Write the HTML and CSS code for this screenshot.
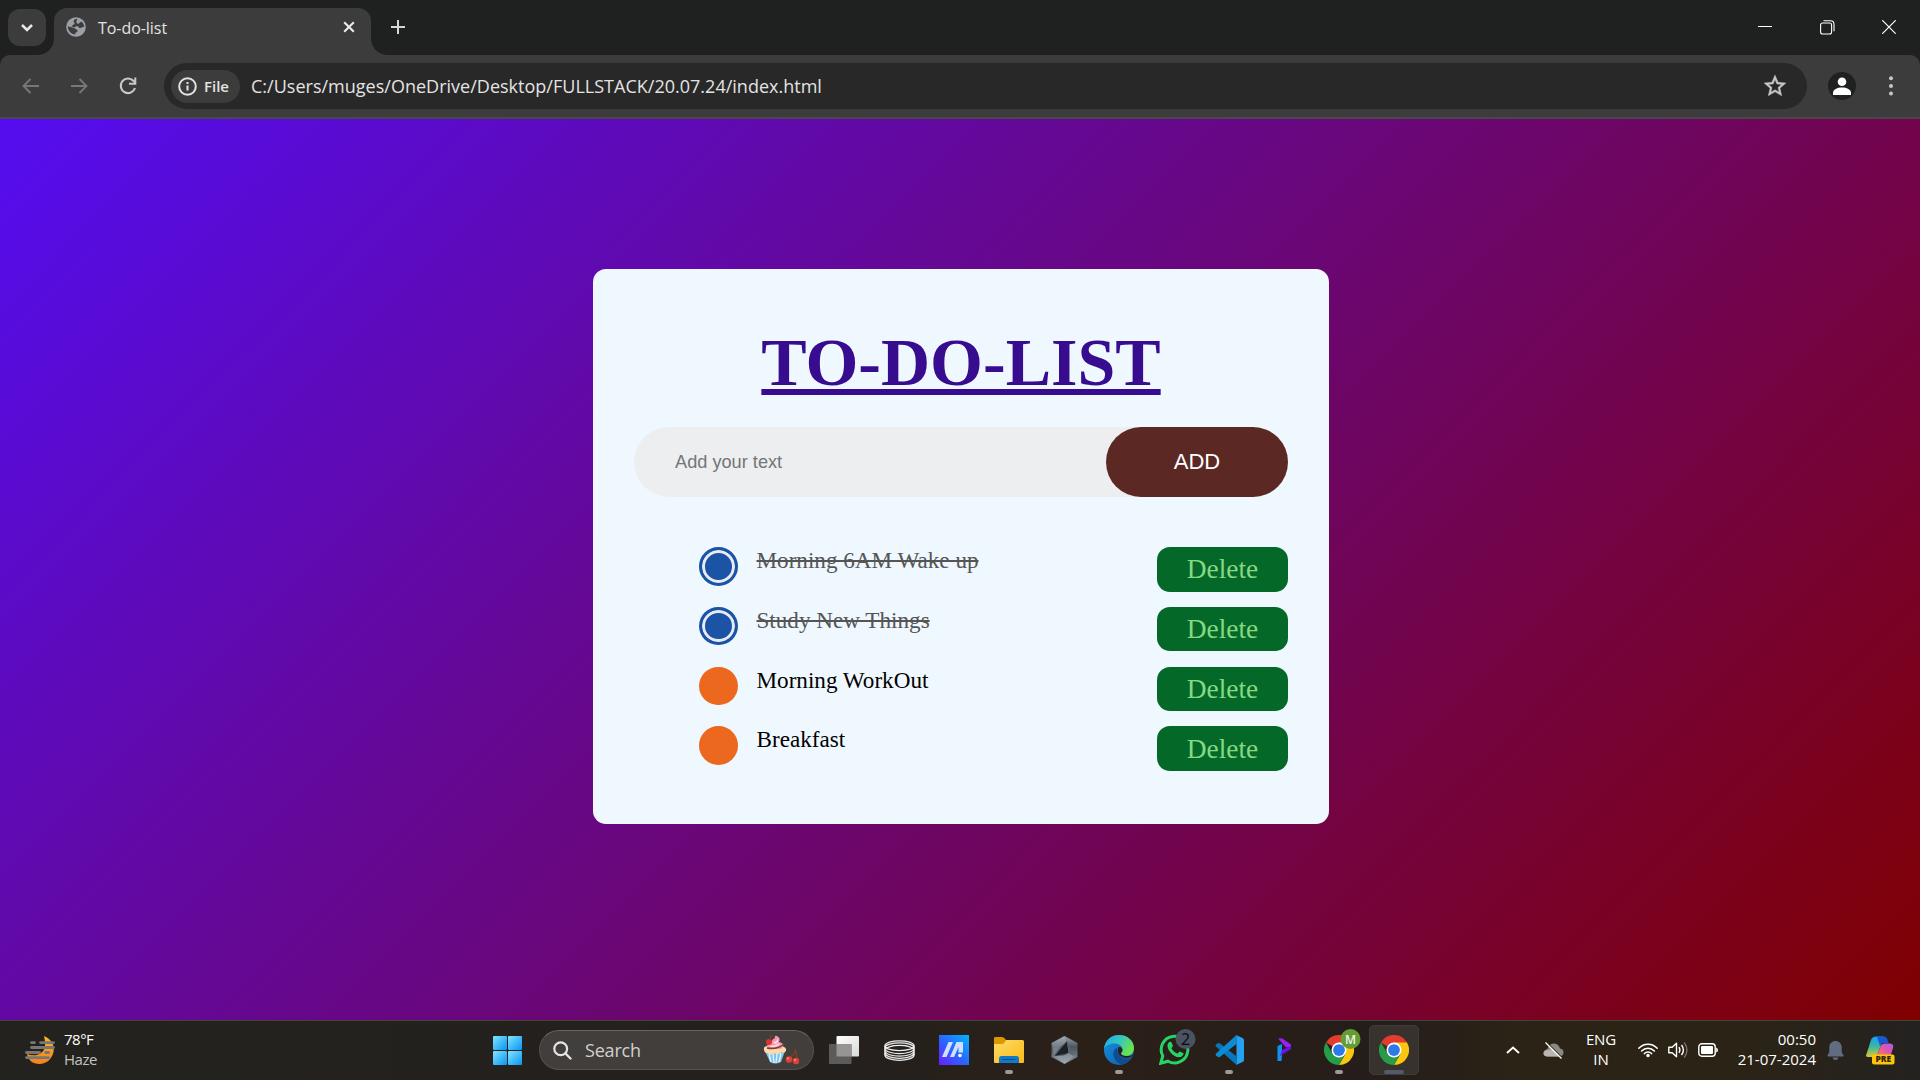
FILE: index.html
```
<!DOCTYPE html>
<html lang="en">
<head>
<meta charset="utf-8">
<title>To-do-list</title>
<link rel="stylesheet" href="styles.css">
</head>
<body>
<svg class="defs" width="0" height="0" aria-hidden="true">
  <defs>
    <linearGradient id="win" x1="0" y1="0" x2="1" y2="1"><stop offset="0" stop-color="#8ae2ff"/><stop offset=".5" stop-color="#42bdf8"/><stop offset="1" stop-color="#0d93f0"/></linearGradient>
    <linearGradient id="asus" x1="0" y1="1" x2="1" y2="0"><stop offset="0" stop-color="#6a1cff"/><stop offset=".5" stop-color="#2869ff"/><stop offset="1" stop-color="#00b4ff"/></linearGradient>
    <linearGradient id="fold" x1="0" y1="0" x2="1" y2="1"><stop offset="0" stop-color="#ffdc6a"/><stop offset="1" stop-color="#fbb913"/></linearGradient>
    <linearGradient id="moon" x1="0" y1="0" x2="0" y2="1"><stop offset="0" stop-color="#ffb52b"/><stop offset="1" stop-color="#f3831b"/></linearGradient>
    <linearGradient id="hex" x1="0" y1="0" x2="0" y2="1"><stop offset="0" stop-color="#98a0a8"/><stop offset=".4" stop-color="#4a545f"/><stop offset="1" stop-color="#8d99a5"/></linearGradient>
    <linearGradient id="edgeTop" x1="0" y1="0" x2="1" y2=".5"><stop offset="0" stop-color="#1ea5ea"/><stop offset=".5" stop-color="#32c5c4"/><stop offset="1" stop-color="#6be34c"/></linearGradient>
    <linearGradient id="edgeLow" x1="0" y1="0" x2="1" y2="1"><stop offset="0" stop-color="#1a92de"/><stop offset="1" stop-color="#0c59a4"/></linearGradient>
    <linearGradient id="copA" x1="0" y1="0" x2="0" y2="1"><stop offset="0" stop-color="#1a9df5"/><stop offset=".5" stop-color="#3bb9a0"/><stop offset="1" stop-color="#e5c52b"/></linearGradient>
    <linearGradient id="copB" x1="1" y1="0" x2="0" y2="1"><stop offset="0" stop-color="#a85cf5"/><stop offset=".5" stop-color="#e356a8"/><stop offset="1" stop-color="#ff8057"/></linearGradient>
    <linearGradient id="white" x1="0" y1="0" x2="1" y2="1"><stop offset="0" stop-color="#fff"/><stop offset="1" stop-color="#d8d8d8"/></linearGradient>
    <symbol id="chrome" viewBox="0 0 48 48">
      <path fill="#e33b2e" d="M24 24 3.2 12A24 24 0 0 1 44.8 12z"/>
      <path fill="#fcc60e" d="M24 12h20.8A24 24 0 0 1 24 48l10.4-18z"/>
      <path fill="#259c47" d="M34.4 30 24 48A24 24 0 0 1 3.2 12L13.6 30z"/>
      <circle cx="24" cy="24" r="12" fill="#fff"/><circle cx="24" cy="24" r="9.4" fill="#2e79e8"/>
    </symbol>
  </defs>
</svg>

<header class="browser">
  <div class="tabstrip">
    <button class="tab-search" aria-label="Search tabs"><svg width="14" height="10" viewBox="0 0 14 10"><path d="M2 2l5 5 5-5" fill="none" stroke="#e8e8e8" stroke-width="2.6"/></svg></button>
    <div class="tab">
      <svg class="globe" width="20" height="20" viewBox="0 0 20 20"><circle cx="10" cy="10" r="9.8" fill="#9aa0a6"/><path fill="#3c3c3c" d="M10.4 1.8c-2 .7-2.900 1.700-2.800 2.800.1 1 1 1.200 1 2.200s-1.600.5-2.100 1.400c-.3.8.3 1.300-.5 1.600-1 .4-2.500-.3-4.200-.3.200 4 3.300 7.700 7.500 8.100v-1.900c1.100 0 2.100-.7 2.200-1.700.1-1-.8-1.200-1.600-1.700-.8-.5-.9-1.300-2.100-1.300l-3-.1c1-.7 2.600-.7 4-.5.500-1.800 2.500-1.200 3.300-1 .9.300.8 1.500 1.800 1.700 1.100.2 1.200-.8 2.200-.9.7 0 1.400 0 2.100-.4-.3-2-1-3.500-2.400-5l-1.900.4c-.4.9-1.100 1.900-2.200 1.600-1.200-.4-1.500-1.500-1.300-2.500.2-.9.900-1.700.9-2.300z"/></svg>
      <span class="tab-title">To-do-list</span>
      <svg class="tab-close" width="12" height="12" viewBox="0 0 12 12"><path d="M1.200 1.200l9.600 9.600M10.800 1.200l-9.600 9.600" stroke="#ececec" stroke-width="2.100"/></svg>
    </div>
    <svg class="new-tab" width="14" height="14" viewBox="0 0 14 14"><path d="M7 0v14M0 7h14" stroke="#d6d6d6" stroke-width="2"/></svg>
    <div class="window-controls">
      <svg width="14" height="14" viewBox="0 0 14 14"><path d="M0 6.500h14" stroke="#fff"/></svg>
      <svg width="15" height="15" viewBox="0 0 15 15" fill="none" stroke="#fff" stroke-width="1.100"><rect x=".6" y="3" width="11" height="11" rx="2"/><path d="M3.500.8h7a3.500 3.500 0 0 1 3.500 3.500v7"/></svg>
      <svg width="14" height="14" viewBox="0 0 14 14"><path d="M.3.3l13.400 13.400M13.700.3L.3 13.700" stroke="#fff" stroke-width="1.200"/></svg>
    </div>
  </div>
  <div class="toolbar">
    <svg class="nav" width="17" height="16" viewBox="0 0 17 16"><path d="M17 8H1.500M8.500 1l-7 7 7 7" fill="none" stroke="#777" stroke-width="1.900"/></svg>
    <svg class="nav" width="17" height="16" viewBox="0 0 17 16"><path d="M0 8h15.500M8.500 1l7 7-7 7" fill="none" stroke="#777" stroke-width="1.900"/></svg>
    <svg class="nav" width="18" height="18" viewBox="0 0 18 18"><path d="M16 11A7.300 7.300 0 1 1 14.300 3.700l2 2" fill="none" stroke="#c8c8c8" stroke-width="2.100"/><path d="M16.300.500v6.200H10" fill="none" stroke="#c8c8c8" stroke-width="2"/></svg>
    <div class="omnibox">
      <span class="chip"><svg width="19" height="19" viewBox="0 0 19 19"><circle cx="9.500" cy="9.500" r="8.300" fill="none" stroke="#e3e3e3" stroke-width="2"/><path d="M9.500 8.500v5M9.500 5v2" stroke="#e3e3e3" stroke-width="2"/></svg><b>File</b></span>
      <span class="url">C:/Users/muges/OneDrive/Desktop/FULLSTACK/20.07.24/index.html</span>
      <svg class="star" width="24" height="24" viewBox="1 1 22 22"><path fill="#c7c7c7" stroke="#c7c7c7" stroke-width=".4" d="M22 9.240l-7.190-.620L12 2 9.190 8.630 2 9.240l5.460 4.730L5.820 21 12 17.270 18.180 21l-1.630-7.030L22 9.240zM12 15.400l-3.760 2.270 1-4.280-3.320-2.880 4.380-.380L12 6.100l1.710 4.040 4.380.380-3.320 2.880 1 4.280L12 15.400z"/></svg>
    </div>
    <svg class="avatar" width="28" height="28" viewBox="0 0 28 28"><circle cx="14" cy="14" r="14" fill="#1f2120"/><circle cx="14" cy="9.700" r="4.300" fill="#fff"/><path fill="#fff" d="M5 23v-2.300c0-3.300 4.400-5.300 9-5.300s9 2 9 5.300V23z"/></svg>
    <svg width="4" height="20" viewBox="0 0 4 20" fill="#c7c7c7"><circle cx="2" cy="2.200" r="2"/><circle cx="2" cy="10" r="2"/><circle cx="2" cy="17.600" r="2"/></svg>
  </div>
</header>

<main class="page">
  <section class="card">
    <h1>TO-DO-LIST</h1>
    <form class="entry"><input type="text" placeholder="Add your text"><button type="button">ADD</button></form>
    <ul class="tasks">
      <li class="done"><i class="mark"></i><span>Morning 6AM Wake up</span><button>Delete</button></li>
      <li class="done"><i class="mark"></i><span>Study New Things</span><button>Delete</button></li>
      <li><i class="mark"></i><span>Morning WorkOut</span><button>Delete</button></li>
      <li><i class="mark"></i><span>Breakfast</span><button>Delete</button></li>
    </ul>
  </section>
</main>

<footer class="taskbar">
  <div class="weather">
    <svg width="30" height="29" viewBox="0 0 30 29"><path fill="url(#moon)" d="M19 0c7 3 11 9 9.500 16-1.500 7-7 12-14 12S3 24 2 18c7 3 17 1 18-8 .3-4-.3-7-1-10z"/><g stroke="#797775" stroke-width="2.800" stroke-linecap="round"><path d="M6.500 6.600h3M15.500 6.600h13M6.500 11.500h22M1.500 16.500h13M20.500 16.500h3M1.500 21.600h22"/></g></svg>
    <p><span class="temp">78°F</span><span class="sky">Haze</span></p>
  </div>
  <svg class="start" width="29" height="29" viewBox="0 0 29 29" fill="url(#win)"><rect width="14" height="14" rx="1"/><rect x="15" width="14" height="14" rx="1"/><rect y="15" width="14" height="14" rx="1"/><rect x="15" y="15" width="14" height="14" rx="1"/></svg>
  <div class="search">
    <svg width="19" height="19" viewBox="0 0 19 19"><circle cx="7.700" cy="7.700" r="6.400" fill="none" stroke="#e4e4e6" stroke-width="2.200"/><path d="M12.500 12.500l5 5" stroke="#e4e4e6" stroke-width="2.400" stroke-linecap="round"/></svg>
    <span>Search</span>
    <svg class="sundae" width="37" height="30" viewBox="0 0 37 30"><path fill="#80c3ee" d="M2 16h20l-4 11q-6 3-11 0z"/><path d="M6 18l2 9M10 19l1 9M14 19l-1 9M18 18l-2 9" stroke="#dff4ff" stroke-width="1.300"/><path fill="#ffd9a8" d="M1 15q-1-4 4-4h13q6 1 5 5-2 3-5 1-3 4-6 1-4 3-6 0-4 1-5-3z"/><path fill="#f596b2" d="M4 13q-1-4 4-5 1-4 4-5Q11 0 14 1q4 2 2 6 5 1 4 4 0 3-4 3H6z"/><path fill="#ffe1e8" d="M6 11q6 0 11-3-1 4-9 4zM10 7q4 0 5-4 1 5-3 6z"/><path d="M4 13q10 2 17-4" stroke="#7a3f2c" stroke-width="1.500" fill="none"/><circle cx="6" cy="7" r="3" fill="#df352e"/><path d="M6 5L9 0M27 22q6-4 5-8 2 5 2 10" stroke="#8a3c2a" stroke-width="1.100" fill="none"/><circle cx="26" cy="24.500" r="3.300" fill="#e33e36"/><circle cx="33" cy="26" r="3.200" fill="#e33e36"/><circle cx="25" cy="23.500" r="1" fill="#ff9488"/><circle cx="32" cy="25" r="1" fill="#ff9488"/></svg>
  </div>
  <nav class="apps">
    <a><svg width="30" height="28" viewBox="0 0 30 28"><rect x="7.500" width="22.500" height="20.500" rx="1" fill="url(#white)"/><rect y="8" width="22.500" height="20" rx="1" fill="#5c5b5a"/><path d="M7.500 8H22.500v12.500H7.500z" fill="#969594"/></svg></a>
    <a><svg width="31" height="21" viewBox="0 0 31 21" fill="none" stroke="#ececec" stroke-width="1.250"><path d="M.8 6C1-1 30-1 30.200 6M.8 8C2 1.200 29 1.200 30.200 8M.8 10.500C3 3.500 28 3.500 30.200 10.500M.8 6c1 6 28.400 6 29.400 0M.8 8.300c1 7 28.400 7 29.400 0M.8 10.500c1 7.500 28.400 7.500 29.400 0M.8 12.700c1 7.500 28.400 7.500 29.400 0M.8 14.800c1 7.300 28.400 7.300 29.400 0M.8 6v9M30.200 6v9"/></svg></a>
    <a><svg width="30" height="30" viewBox="0 0 30 30"><path fill="url(#asus)" d="M0 0h30v30H0z"/><path fill="#cfe0ff" d="M3 22L9.500 7H14L7.500 22zM11 22l6.500-15H24v10.500h-4.500V12L15 22z"/><circle cx="21" cy="20.500" r="1.800" fill="#fff"/></svg></a>
    <a class="running"><svg width="30" height="28" viewBox="0 0 30 28"><path fill="#df9700" d="M0 2Q0 1 1.500 1H8q2 0 4 3h14v8H0z"/><path fill="url(#fold)" d="M0 8h8q2 0 4-4h16.500q1.500 0 1.500 1.500V26q0 1-1 1H1q-1 0-1-1z"/><path fill="#1179ca" d="M5 27v-4.500Q5 20 7.500 20h15q2.500 0 2.500 2.500V27z"/><path d="M8.500 23.500h13" stroke="#084b87"/></svg></a>
    <a><svg width="27" height="28" viewBox="0 0 27 28"><path fill="url(#hex)" d="M13.500 0L26.500 7v14l-13 7L.5 21V7z"/><path fill="#aeb6bd" d="M13.500 0L15 5 3 18 .5 7z" opacity=".4"/><path fill="#1d2026" d="M16 5.500L17.500 17 13 19.500 3.500 20z"/><path fill="#596470" d="M16 5.500L23 20l-5.500-3z"/><path fill="#c7cdd2" d="M13.500 28L3.500 20l14-3 5.500 3z" opacity=".3"/></svg></a>
    <a class="running"><svg width="30" height="30" viewBox="0 0 30 30"><circle cx="15" cy="15" r="15" fill="url(#edgeLow)"/><path fill="url(#edgeTop)" d="M0 14C1 5 7 0 15 0c9 0 15 6 15 13 0 5-3.500 8-8 8-3 0-5-1-5-2.500 0-1 1.500-1.500 1.500-4C18.500 11 15 8.500 10.500 8.500 5 8.500 1 11 0 14z"/><path fill="#0f4d92" d="M13 12.500c-7 4-3 15 5 17.200 4-1 7.500-3.500 9.500-7.200-4 2-8.500 1.500-11-1-2.500-2.300-3.500-5.500-3.500-9z"/><path fill="#292018" d="M14.500 12.500c-1.500 3-.5 7 3 9 3.500 2 8 1.500 10.800-.5.700-.4 1.700.3 1.700.3V19c-2 2-5 2.300-8 2-3-.2-5-1.200-5-2.500 0-1 1.500-1.500 1.500-3.500 0-1.500-2.500-4-4-2.500z"/></svg></a>
    <a><svg class="badged" width="37" height="36" viewBox="0 0 37 36"><path d="M1.800 34.200l2-7.300A13.300 13.300 0 1 1 9 32.200z" fill="none" stroke="#25d366" stroke-width="3"/><path fill="#25d366" d="M8.500 17c0-4 3.500-5 4-3.500l1.400 3.200c.3.800-1.700 2-1.300 2.700 1.300 2.400 3.300 4 5.800 5 .8.300 1.700-2.200 2.500-1.900l3.200 1.600c1.200.6-.3 4.200-4 4.200C14 28 8.500 21 8.500 17z"/><circle cx="26.500" cy="10" r="10" fill="#495362"/><text x="26.500" y="15.700" text-anchor="middle" class="badge-dark">2</text></svg></a>
    <a class="running"><svg width="30" height="30" viewBox="0 0 30 30"><path fill="#0877bd" d="M22.500 30L2 11.500q-1-1 0-2L4 8.200q1-.5 1.700 0L22 21z"/><path fill="#0d8ad4" d="M22.500 0L2 18.500q-1 1 0 2l2 1.400q1 .5 1.700 0L22.500 9z"/><path fill="#24a2f1" d="M22 0l6.500 2.900Q30 3.600 30 5v20q0 1.400-1.500 2.100L22 30q.5-.6.500-2V2q0-1.400-.5-2z"/></svg></a>
    <a><svg width="14" height="24" viewBox="0 0 14 24"><path fill="#0f92f3" d="M.5 8L5 6v10.500l-.5 6.500h-4z"/><path fill="#9622f0" d="M1 .5l4-.2L14 6.500V9L9 9.500z"/><path fill="#6a13e8" d="M14 8v3L3 18l2-6z"/></svg></a>
    <a class="running"><svg class="badged" width="37" height="36" viewBox="0 0 37 36"><use href="#chrome" y="6" width="30" height="30"/><circle cx="26.500" cy="10" r="10" fill="#669c35"/><text x="26.500" y="14.600" text-anchor="middle" class="badge-light">M</text></svg></a>
    <a class="active"><svg width="30" height="30"><use href="#chrome" width="30" height="30"/></svg></a>
  </nav>
  <div class="tray">
    <svg class="caret" width="14" height="8" viewBox="0 0 14 8"><path d="M1 7l6-5.500L13 7" fill="none" stroke="#fff" stroke-width="1.900"/></svg>
    <svg class="cloud" width="21" height="17" viewBox="0 0 21 17"><path fill="#8b8885" d="M4 14.500Q0 14 .5 10.500 1 7.500 4.500 7q1-5 6-5.500 5 0 6.500 5 3.500.5 3.500 4 0 3.500-4 4z"/><path fill="#b9b6b2" d="M4 14.500Q.5 14 .5 11q1-3 5-3 3-2 6 1l5 5.500z"/><path d="M3.300.3L18.800 15.800" stroke="#2b2316" stroke-width="1.600"/><path d="M2.500.5L18.500 16.500" stroke="#fff" stroke-width="1.300"/></svg>
    <p class="lang"><span>ENG</span><span>IN</span></p>
    <div class="status">
      <svg width="20" height="16" viewBox="0 0 20 16" fill="none" stroke="#fff" stroke-width="1.500" stroke-linecap="round"><path d="M.8 6.200a12.500 12.500 0 0 1 18.400 0M3.600 9a8.800 8.800 0 0 1 12.800 0M6.400 11.600a5 5 0 0 1 7.200 0"/><circle cx="10" cy="13.600" r="1" fill="#fff"/></svg>
      <svg width="20" height="18" viewBox="0 0 20 18" fill="none" stroke="#fff" stroke-width="1.400" stroke-linejoin="round"><path d="M.8 6.200h3.400L8.500 2.200v13.600l-4.300-4H.8z"/><path d="M11 6.200q1.800 2.800 0 5.600M13.500 4q3.800 5 0 10"/><path d="M16.200 1.500q5.500 7.500 0 15" stroke="#77736a"/></svg>
      <svg width="20" height="14" viewBox="0 0 20 14"><rect x=".8" y=".8" width="16.400" height="12.400" rx="3" fill="none" stroke="#fff" stroke-width="1.400"/><rect x="3" y="3" width="12" height="8" rx="1" fill="#fff"/><path d="M18.200 4.500q1.800.5 1.800 2.500t-1.800 2.500z" fill="#fff"/></svg>
    </div>
    <p class="clock"><span>00:50</span><span>21-07-2024</span></p>
    <svg class="bell" width="17" height="19" viewBox="0 0 17 19"><path fill="#606c80" d="M8.500 0C5 0 2.300 2.700 2.300 6.200v5L.4 14.500q-.3 1 .6 1h15q.9 0 .6-1l-1.900-3.300v-5C14.700 2.700 12 0 8.500 0zM5.600 16.500h5.800Q11 19 8.500 19t-2.900-2.500z"/></svg>
    <svg class="copilot" width="30" height="29" viewBox="0 0 30 29"><path fill="url(#copA)" d="M1.500 18L6 4Q7.200.5 11 .5h8L13 17q-1 4-5 4H3Q0 21 1.500 18z"/><path fill="#1659d6" d="M12 .5h7q2.500 0 3.300 2.500L23.500 7H19q-3 0-4 3z"/><path fill="url(#copB)" d="M20 7.500h5Q29.500 8 28 12l-2.500 8H12l3.500-9.500q1-3 4.500-3z"/><rect x="7" y="18.500" width="22.500" height="10" rx="2" fill="#ffc40c"/><text x="18.300" y="26.300" text-anchor="middle" class="pre">PRE</text></svg>
  </div>
</footer>
</body>
</html>
```
FILE: styles.css
```
* { box-sizing: border-box; }
body { margin: 0; width: 1920px; height: 1080px; overflow: hidden; display: flex; flex-direction: column; background: #1f2120; font-family: "Open Sans", "Noto Sans", sans-serif; }
.defs { position: absolute; }
svg { display: block; flex: none; }
p { margin: 0; }
button { border: 0; padding: 0; }

/* Browser chrome */
.browser { flex: none; background: #1f2120; }
.tabstrip { height: 55px; display: flex; align-items: flex-start; padding: 8px 0 0 8px; }
.tab-search { width: 38px; height: 37px; margin-top: 1px; border-radius: 12px; background: #3c3c3c; display: grid; place-items: center; }
.tab { position: relative; width: 317px; height: 47px; margin-left: 8px; padding: 0 16px 9px 12px; display: flex; align-items: center; border-radius: 13px 13px 0 0; background: #3c3c3c; }
.tab::before, .tab::after { content: ""; position: absolute; bottom: 0; width: 16px; height: 16px; }
.tab::before { left: -16px; background: radial-gradient(circle at 0 0, transparent 15.500px, #3c3c3c 16px); }
.tab::after { right: -16px; background: radial-gradient(circle at 100% 0, transparent 15.500px, #3c3c3c 16px); }
.tab-title { margin-left: 12px; padding-top: 1px; font-size: 16px; letter-spacing: -.05px; color: #e3e3e3; }
.tab-close { margin-left: auto; }
.new-tab { margin: 12px 0 0 20px; }
.window-controls { margin: 12px 24px 0 auto; display: flex; gap: 47.500px; }
.toolbar { height: 64px; display: flex; align-items: center; padding: 0 27px 0 22px; background: #3c3c3c; border-bottom: 2px solid #484848; border-radius: 10px 10px 0 0; }
.nav { margin-right: 32px; }
.nav:nth-child(3) { margin: 0 27px 0 -1px; }
.omnibox { flex: 1; height: 46px; display: flex; align-items: center; padding: 0 20px 0 7px; border-radius: 23px; background: #282828; }
.chip { width: 69px; height: 33px; display: flex; align-items: center; gap: 7px; padding-left: 7px; border-radius: 17px; background: #3c3c3c; color: #e3e3e3; font-size: 15px; }
.chip b { font-weight: 600; }
.url { margin-left: 11px; font-size: 18px; letter-spacing: .01px; color: #e3e3e3; white-space: nowrap; }
.star { margin-left: auto; }
.avatar { margin: 0 33px 0 21px; }

/* Page */
.page { height: 901px; flex: none; padding-top: 150px; background: linear-gradient(135deg, #540df0, #800000); font-family: "Liberation Serif", "Times New Roman", serif; }
.card { width: 736px; height: 555px; margin-left: 593px; padding: 54px 41px 0; border-radius: 13px; background: #f0f8ff; }
h1 { margin: 0; height: 78px; line-height: 78px; text-align: center; font-size: 68px; color: #370c8f; text-decoration: underline; text-decoration-thickness: 6px; text-underline-offset: 4px; text-decoration-skip-ink: none; }
.entry { display: flex; height: 70px; margin: 26px 0 50px; border-radius: 35px; background: #edeeef; }
.entry input { flex: 1; min-width: 0; border: 0; background: none; padding: 0 0 0 41px; font: 18.200px "Liberation Sans", Arial, sans-serif; }
.entry input::placeholder { color: #757575; }
.entry button { width: 182px; border-radius: 35px; background: #5c2824; color: #fff; font: 22px "Liberation Sans", Arial, sans-serif; }
.tasks { list-style: none; margin: 0; padding: 0 0 0 65px; display: grid; grid-auto-rows: 44.600px; row-gap: 15.200px; }
.tasks li { display: flex; align-items: flex-start; color: #000; }
.mark { width: 39px; height: 38.600px; border-radius: 50%; background: #ec681f; }
.done .mark { background: #1b54a6; border: 3px solid #1b54a6; box-shadow: inset 0 0 0 3px #e9ebf3; }
.tasks span { margin-left: 18.500px; line-height: 26px; font-size: 23.150px; }
.done span { color: #555; text-decoration: line-through; text-decoration-thickness: 2px; }
.tasks button { width: 131px; height: 44.600px; margin-left: auto; padding-top: 1px; border-radius: 13px; background: #046829; color: #84d982; font: 27.400px "Liberation Serif", serif; }

/* Taskbar */
.taskbar { height: 60px; flex: none; display: flex; align-items: center; padding-bottom: 1px; border-top: 1px solid #45423c; background: linear-gradient(90deg, #24221e, #23201e 42%, #2b2018 57%, #251d1a 72%, #2b2316 79%, #2b2316 91%, #242220); color: #fff; font-size: 15px; line-height: 20px; }
.weather { width: 493px; padding-left: 25px; display: flex; align-items: center; gap: 9px; letter-spacing: -.5px; }
.weather p, .lang, .clock { padding-bottom: 2px; }
.weather span, .lang span, .clock span { display: block; }
.sky { color: #c4c2c0; }
.search { width: 275px; height: 40px; margin-left: 17px; display: flex; align-items: center; padding: 0 13px; border-radius: 20px; background: #423e3b; border: 1px solid #55514e; border-top-color: #696562; font-size: 18px; color: #d2d0ce; }
.search span { margin-left: 13px; letter-spacing: -.2px; }
.sundae { margin-left: auto; }
.apps { display: flex; gap: 5px; margin-left: 5px; }
.apps a { position: relative; width: 50px; height: 50px; display: grid; place-items: center; border-radius: 5px; }
.apps .active { background: #38322e; border: 1px solid #423c38; }
.running::after, .active::after { content: ""; position: absolute; bottom: 1px; left: 21px; width: 8px; height: 4px; border-radius: 2px; background: #9c9996; }
.active::after { left: 14px; bottom: 0; width: 20px; background: #505c6e; }
.badged { margin: -6px -7px 0 0; }
.badge-dark { font: 16px "Open Sans", sans-serif; fill: #080808; }
.badge-light { font: 600 12px "Open Sans", sans-serif; fill: #f1f5e8; }
.tray { flex: 1; display: flex; align-items: center; margin-left: 87px; }
.cloud { margin-left: 23px; }
.lang { width: 74px; text-align: center; letter-spacing: -.1px; }
.status { display: flex; align-items: center; gap: 10px; }
.clock { width: 98px; text-align: right; white-space: nowrap; }
.bell { margin-left: 11px; }
.copilot { margin-left: 21px; }
.pre { font: 800 8.500px "Open Sans", sans-serif; fill: #33280a; }
```
